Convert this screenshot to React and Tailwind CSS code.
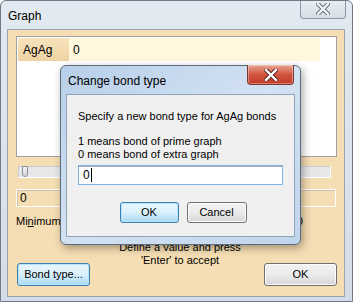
function CloseGlyph({ active }) {
  return (
    <svg width="14" height="12" viewBox="0 0 14 12">
      <path
        d="M2 1 L12 11 M12 1 L2 11"
        stroke={active ? "#5a2020" : "#5d6670"}
        strokeWidth="4.2"
        strokeLinecap="square"
        fill="none"
      />
      <path
        d="M2 1 L12 11 M12 1 L2 11"
        stroke={active ? "#ffffff" : "#f4f6f8"}
        strokeWidth="2.4"
        strokeLinecap="square"
        fill="none"
      />
    </svg>
  )
}

function WinButton({ children, primary, className = "" }) {
  const look = primary
    ? "border-[#3c7fb1] bg-gradient-to-b from-[#eaf6fd] via-[#d9f0fc] to-[#a7d9f5] shadow-[inset_0_0_0_1px_#b6e6fb]"
    : "border-[#707070] bg-gradient-to-b from-[#f2f2f2] via-[#ebebeb] to-[#d5d5d5] shadow-[inset_0_0_0_1px_#fcfcfc]"
  return (
    <div
      className={`flex shrink-0 items-center justify-center rounded-[3px] border text-[11px] text-black ${look} ${className}`}
    >
      {children}
    </div>
  )
}

function ChangeBondDialog() {
  return (
    <div className="absolute left-[59px] top-[64px] flex h-[180px] w-[241px] flex-col rounded-[6px] border border-[#5d6b7a] bg-gradient-to-br from-[#b7cfe9] via-[#d3e2f2] to-[#c0d5ec] shadow-[2px_3px_8px_rgba(0,0,0,0.35)]">
      <div className="relative flex h-[28px] shrink-0 items-center pl-[7px] pt-[1px] text-[12px] text-black">
        Change bond type
        <div className="absolute right-[6px] top-[-1px] flex h-[20px] w-[47px] items-center justify-center rounded-b-[4px] border border-t-0 border-[#7a3a32] bg-gradient-to-b from-[#e8a493] via-[#d0543f] to-[#c23c27] shadow-[inset_0_0_0_1px_rgba(255,255,255,0.35)]">
          <CloseGlyph active />
        </div>
      </div>
      <div className="mx-[5px] mb-[7px] flex flex-1 flex-col whitespace-nowrap border border-[#8fa3b9] bg-[#f0f0f0] px-[11px] text-[11px] leading-[13px] text-black [&>*]:shrink-0">
        <div className="mt-[15px]">Specify a new bond type for AgAg bonds</div>
        <div className="mt-[12px]">1 means bond of prime graph</div>
        <div>0 means bond of extra graph</div>
        <div className="mt-[4px] flex h-[20px] items-center border border-[#7eb4ea] bg-white px-[4px] text-[12px] shadow-[inset_0_1px_0_#abadb3]">
          0<span className="ml-[1px] inline-block h-[14px] w-px bg-black" />
        </div>
        <div className="mt-[17px] flex justify-center gap-[8px] pl-[5px]">
          <WinButton primary className="h-[21px] w-[59px]">
            OK
          </WinButton>
          <WinButton className="h-[21px] w-[60px]">Cancel</WinButton>
        </div>
      </div>
    </div>
  )
}

export default function App() {
  return (
    <div
      className="relative h-[302px] w-[353px] overflow-hidden rounded-t-[6px] border border-[#707a86] bg-gradient-to-b from-[#e3e9f0] to-[#d4dde7]"
      style={{ fontFamily: '"Liberation Sans", Arial, sans-serif' }}
    >
      <div className="relative flex h-[28px] items-center pl-[7px] pt-[2px] text-[12px] text-black">
        Graph
        <div className="absolute right-[6px] top-[-1px] flex h-[19px] w-[46px] items-center justify-center rounded-b-[4px] border border-t-0 border-[#8c98a6] bg-gradient-to-b from-[#e9eef3] to-[#d5dde6]">
          <CloseGlyph />
        </div>
      </div>

      <div className="ml-[6px] flex h-[268px] w-[338px] flex-col border border-[#9ba5b0] bg-[#f5deb3] text-[11px] text-black [&>*]:shrink-0">
        <div className="ml-[8px] mt-[6px] h-[121px] w-[321px] border border-[#a0a0a0] bg-white">
          <div className="ml-px mt-px flex h-[23px] text-[12px]">
            <div className="flex w-[51px] items-center bg-gradient-to-b from-[#f7e3bd] to-[#efd3a2] pl-[5px]">
              AgAg
            </div>
            <div className="flex w-[251px] items-center bg-[#fff8dc] pl-[4px]">0</div>
          </div>
        </div>

        <div className="relative ml-[10px] mt-[9px] h-[12px] w-[313px] border-b border-r border-white bg-[#e5e7e9] shadow-[inset_1px_1px_0_#c8ccd0]">
          <div className="absolute left-[4px] top-0 h-[11px] w-[6px] rounded-b-[3px] border border-[#8a8f96] bg-gradient-to-b from-[#f4f4f4] to-[#d8d8d8]" />
        </div>

        <div className="ml-[8px] mt-[11px] flex h-[18px] w-[320px] items-center border border-white pl-[3px] text-[12px] shadow-[inset_1px_1px_0_#d0c3a8]">
          0
        </div>

        <div className="mt-[6px] flex h-[16px] items-center justify-between pl-[8px] pr-[41px]">
          <span>
            Mi<span className="underline">n</span>imum, 0
          </span>
          <span>Maximum, 10</span>
        </div>

        <div className="mt-[12px] flex flex-col items-center pl-[16px] pr-[8px] leading-[13px]">
          <div>Define a value and press</div>
          <div>'Enter' to accept</div>
        </div>

        <div className="ml-[9px] mt-[-4px] flex w-[320px] justify-between">
          <WinButton primary className="h-[23px] w-[73px]">
            Bond type...
          </WinButton>
          <WinButton className="h-[23px] w-[73px]">OK</WinButton>
        </div>
      </div>

      <ChangeBondDialog />
    </div>
  )
}
